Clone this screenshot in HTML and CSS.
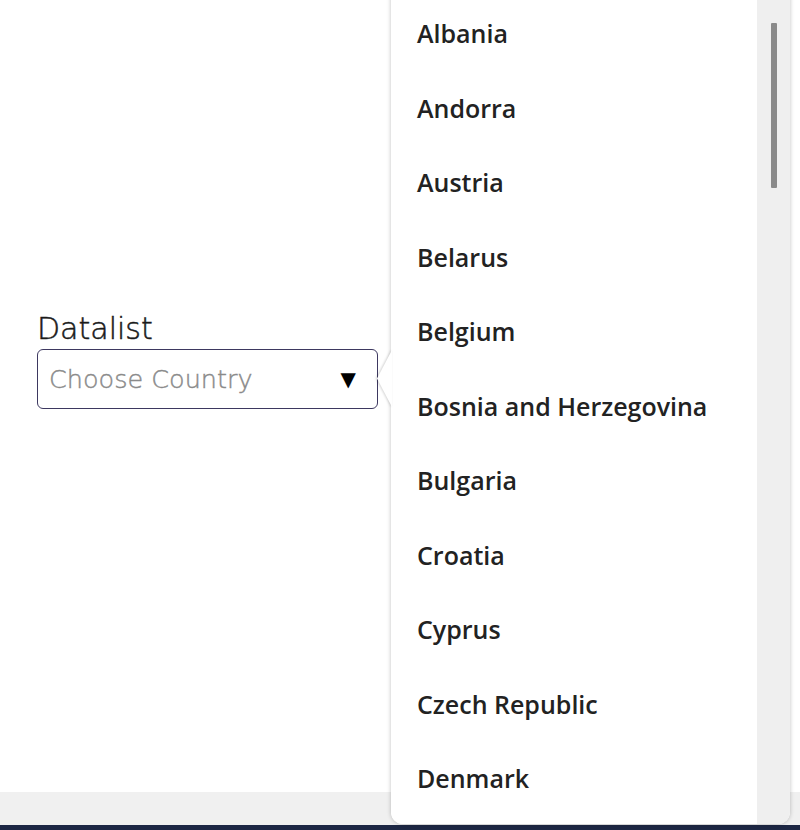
FILE: index.html
```html
<!DOCTYPE html>
<html>
<head>
<meta charset="utf-8">
<link rel="stylesheet" href="styles.css">
</head>
<body>
<div class="page">
  <main class="main">
    <div class="field">
      <label class="label">Datalist</label>
      <div class="input">
        <span class="placeholder">Choose Country</span>
        <span class="caret">&#9660;</span>
      </div>
    </div>
  </main>
  <div class="band"></div>
  <div class="strip"></div>
</div>
<div class="popup">
  <span class="notch"></span>
  <ul class="list">
    <li>Albania</li>
    <li>Andorra</li>
    <li>Austria</li>
    <li>Belarus</li>
    <li>Belgium</li>
    <li>Bosnia and Herzegovina</li>
    <li>Bulgaria</li>
    <li>Croatia</li>
    <li>Cyprus</li>
    <li>Czech Republic</li>
    <li>Denmark</li>
  </ul>
  <div class="track"><div class="thumb"></div></div>
</div>
</body>
</html>
```

FILE: styles.css
```css
html, body {
  margin: 0;
  padding: 0;
  background: #ffffff;
  overflow: hidden;
}
.page {
  height: 830px;
  display: flex;
  flex-direction: column;
}
.main {
  height: 792px;
  padding: 309px 0 0 37px;
  box-sizing: border-box;
}
.field {
  display: flex;
  flex-direction: column;
  width: 341px;
}
.label {
  font-family: "DejaVu Sans", sans-serif;
  font-weight: 300;
  font-size: 30px;
  line-height: 40px;
  color: #1a1a1a;
  -webkit-text-stroke: 0.5px #1a1a1a;
}
.input {
  height: 60px;
  box-sizing: border-box;
  border: 1.5px solid #3d3860;
  border-radius: 6px;
  display: flex;
  align-items: center;
  justify-content: space-between;
  padding: 0 21px 0 11px;
}
.placeholder {
  font-family: "DejaVu Sans", sans-serif;
  font-weight: 300;
  font-size: 25.5px;
  color: #8a8a8a;
  -webkit-text-stroke: 0.4px #8a8a8a;
}
.caret {
  font-family: "DejaVu Sans", sans-serif;
  font-size: 20px;
  color: #000;
}
.band {
  height: 33px;
  background: #f0f0f0;
}
.strip {
  height: 5px;
  background: #1d2744;
}
.popup {
  position: absolute;
  left: 391px;
  top: -20px;
  width: 399px;
  height: 844px;
  background: #ffffff;
  border-radius: 12px;
  box-shadow: 0 0 4px rgba(0,0,0,0.25);
  display: flex;
}
.notch {
  position: absolute;
  left: -14px;
  top: 370px;
  width: 15px;
  height: 57px;
  filter: drop-shadow(-1px 0 1px rgba(0,0,0,0.18));
}
.notch::before {
  content: "";
  display: block;
  width: 100%;
  height: 100%;
  background: #ffffff;
  clip-path: polygon(100% 0, 0 50%, 100% 100%);
}
.list {
  flex: 1;
  list-style: none;
  margin: 0;
  padding: 16px 0 0 26px;
  font-family: "Open Sans", "Noto Sans", sans-serif;
  font-weight: 600;
  font-size: 25px;
  color: #222222;
  overflow: hidden;
  background: #fff;
  border-radius: 12px 0 0 12px;
}
.list li {
  height: 74.5px;
  line-height: 74.5px;
}
.track {
  width: 33px;
  background: #efefef;
  border-radius: 0 12px 12px 0;
  position: relative;
}
.thumb {
  position: absolute;
  left: 14px;
  top: 43px;
  width: 6px;
  height: 165px;
  background: #8a8a8a;
  border-radius: 1px;
}
```
